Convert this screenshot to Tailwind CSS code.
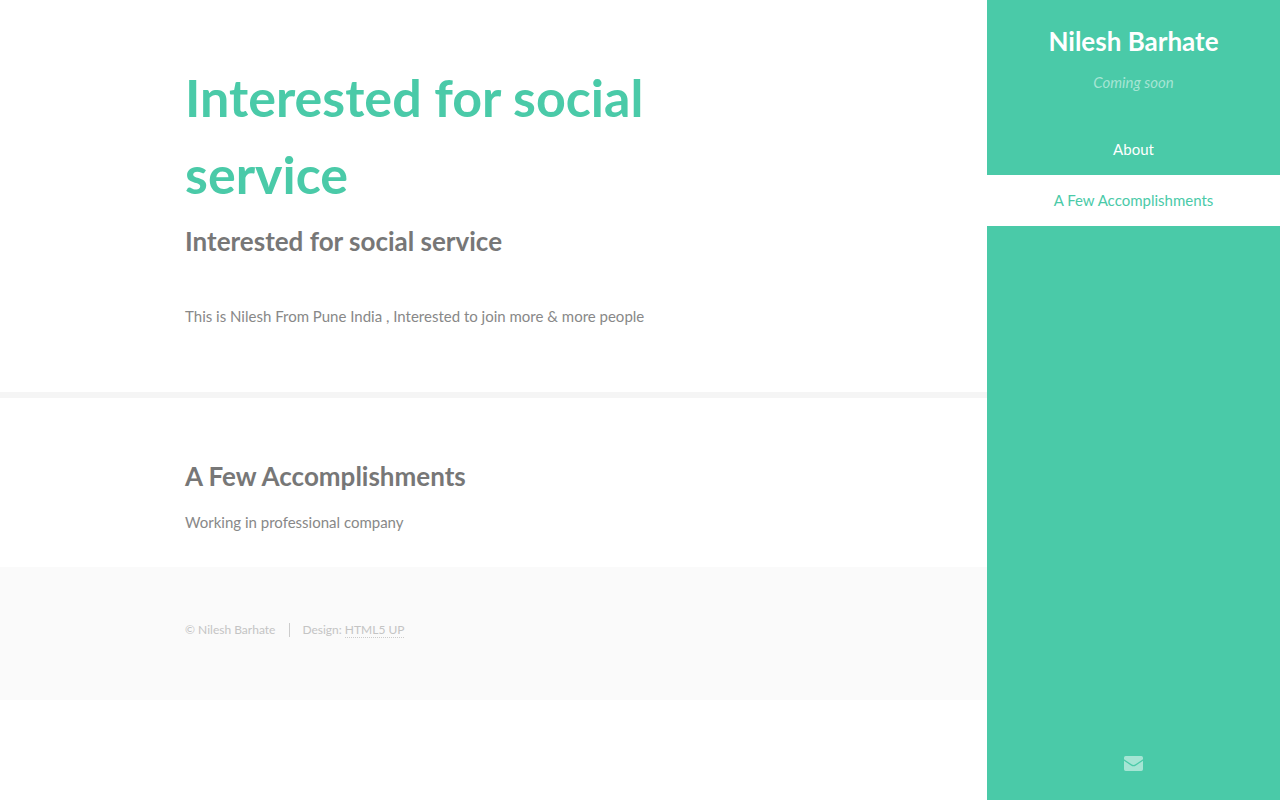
<!DOCTYPE html>
<html lang="en">
<head>
  <meta charset="UTF-8" />
  <meta name="viewport" content="width=device-width, initial-scale=1.0" />
  <title>Nilesh Barhate</title>
  <script src="https://cdn.jsdelivr.net/npm/@tailwindcss/browser@4"></script>
</head>
<body class="flex min-h-screen bg-white font-['Lato',sans-serif] text-[15px] leading-[26px] text-[#888888]">

  <!-- Main -->
  <div class="min-w-0 flex-1">
    <main>
      <section id="about" class="border-b-6 border-[#f5f5f5] pt-[59px] pb-[63px]">
        <div class="mx-auto w-5/8">
          <h1 class="text-[52px] leading-[77px] font-bold text-[#4acaa8]">Interested for social service</h1>
          <h2 class="mt-[9px] text-[26px] leading-[39px] font-bold text-[#777777]">Interested for social service</h2>
          <p class="mt-[42px]">This is Nilesh From Pune India , Interested to join more &amp; more people</p>
        </div>
      </section>

      <section id="accomplishments" class="pt-[59px] pb-8">
        <div class="mx-auto w-5/8">
          <h2 class="text-[26px] leading-[39px] font-bold text-[#777777]">A Few Accomplishments</h2>
          <p class="mt-[13px]">Working in professional company</p>
        </div>
      </section>
    </main>

    <!-- Footer -->
    <footer class="bg-[#fafafa] pt-14 pb-[63px]">
      <ul class="mx-auto flex w-5/8 text-xs leading-[14px] text-[#c4c4c4]">
        <li>&copy; Nilesh Barhate</li>
        <li class="ml-[14px] border-l border-[#cccccc] pl-3">Design: <a href="#" class="border-b border-dotted border-[#cccccc]">HTML5 UP</a></li>
      </ul>
    </footer>
  </div>

  <!-- Sidebar -->
  <header class="sticky top-0 flex h-screen w-[293px] shrink-0 flex-col bg-[#4acaa8] text-center text-white">
    <div class="pt-[22px]">
      <h1 class="text-[26px] leading-[39px] font-bold">Nilesh Barhate</h1>
      <p class="mt-2 text-[#a5e5d4] italic">Coming soon</p>
    </div>
    <nav class="mt-[29px]">
      <ul class="leading-[51px]">
        <li><a href="#about" class="block">About</a></li>
        <li><a href="#accomplishments" class="block bg-white text-[#4acaa8]">A Few Accomplishments</a></li>
      </ul>
    </nav>
    <div class="mt-auto flex justify-center pb-7">
      <a href="#" aria-label="Email" class="text-[#a5e5d4]">
        <svg class="h-[18px] w-[19px]" viewBox="0 0 19 18" fill="currentColor"><path d="M0 5.200V3.700Q0 2 1.700 2H17.300Q19 2 19 3.700V5.200L11.500 10.300Q9.500 11.700 7.500 10.300Z" /><path d="M0 6.700L7 11.500Q9.500 13.200 12 11.500L19 6.700V15.300Q19 17 17.300 17H1.700Q0 17 0 15.300Z" /></svg>
      </a>
    </div>
  </header>

</body>
</html>
